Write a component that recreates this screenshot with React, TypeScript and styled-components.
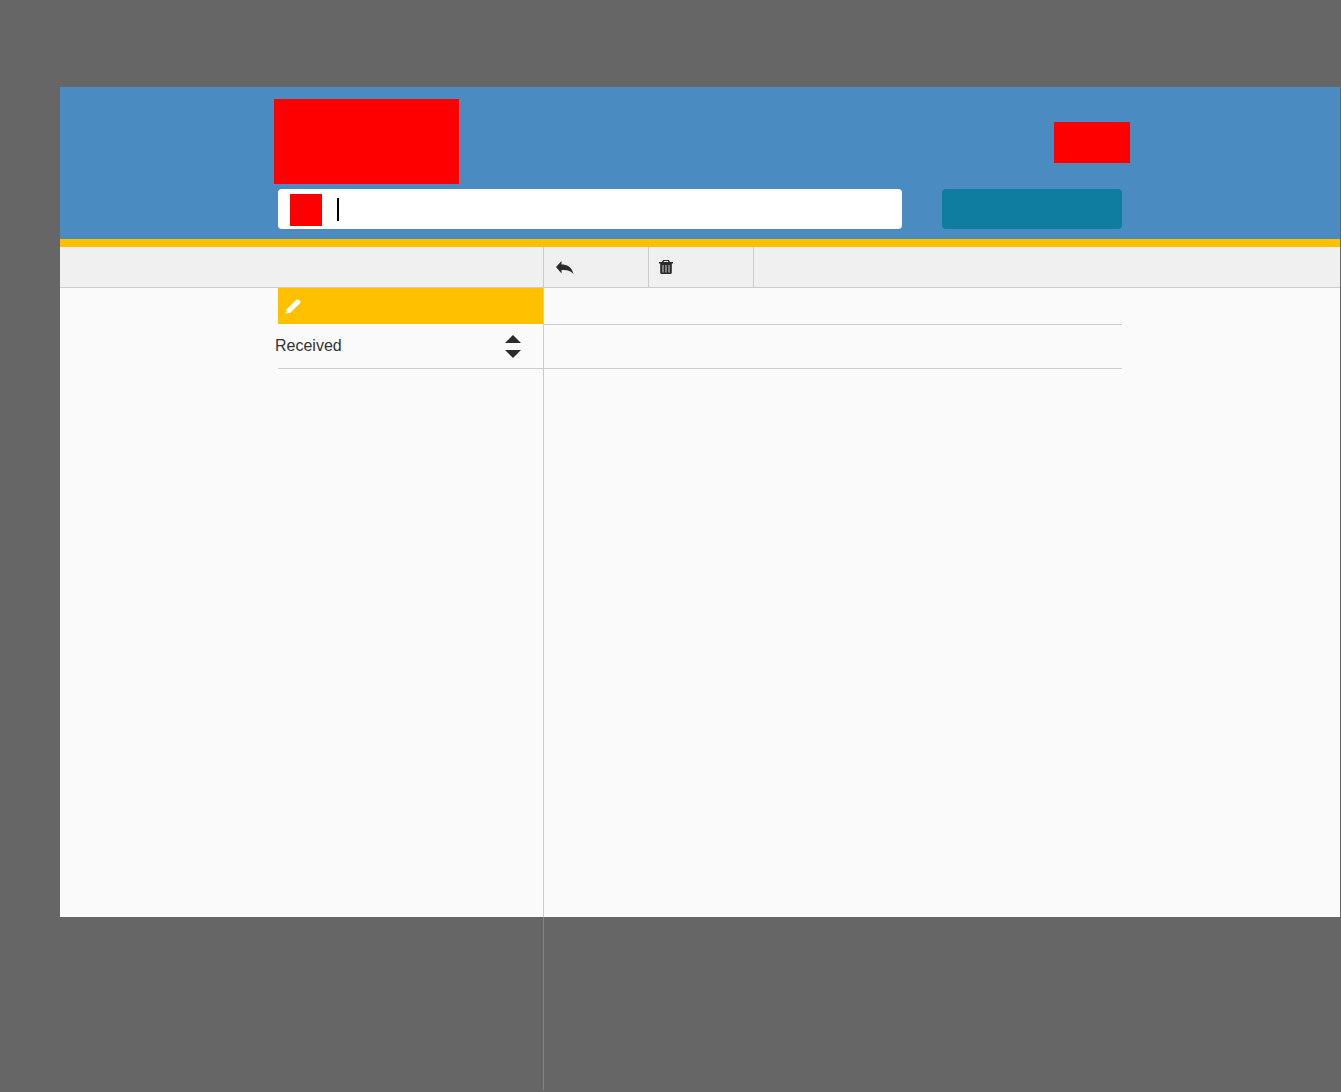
import React from "react";
import styled, { createGlobalStyle } from "styled-components";

const Global = createGlobalStyle`
  html, body { margin: 0; padding: 0; background: #666666; }
  body { font-family: "Liberation Sans", Arial, sans-serif; color: #333333; }
`;

const Page = styled.div`
  height: 1092px;
  padding: 87px 1px 0 60px;
  box-sizing: border-box;
  overflow: hidden;
`;

const Header = styled.header`
  height: 152px;
  background: #4a8bc2;
  box-sizing: border-box;
  padding: 12px 218px 0;
`;

const HeaderTop = styled.div`
  height: 84px;
  display: flex;
  justify-content: space-between;
  align-items: flex-start;
  margin-bottom: 6px;
`;

const Logo = styled.div`
  width: 185px;
  height: 85px;
  margin-left: -4px;
  background: #ff0000;
`;

const Account = styled.div`
  width: 76px;
  height: 41px;
  margin-top: 23px;
  margin-right: -8px;
  background: #ff0000;
`;

const SearchRow = styled.div`
  display: flex;
  justify-content: space-between;
`;

const Search = styled.div`
  width: 624px;
  height: 40px;
  background: #ffffff;
  border-radius: 4px;
  display: flex;
  align-items: flex-start;
  padding-left: 12px;
  gap: 15px;
  box-sizing: border-box;
`;

const SearchIcon = styled.div`
  width: 32px;
  height: 32px;
  margin-top: 5px;
  background: #ff0000;
`;

const Caret = styled.div`
  width: 2px;
  height: 23px;
  margin-top: 9px;
  background: #000000;
`;

const SearchButton = styled.div`
  width: 180px;
  height: 40px;
  background: #0f7d9f;
  border-radius: 4px;
`;

const Strip = styled.div`
  height: 8px;
  background: #ffc000;
`;

const Toolbar = styled.div`
  height: 41px;
  box-sizing: border-box;
  display: flex;
  background: #f0f0f0;
  border-bottom: 1px solid #cccccc;
`;

const ToolbarSpacer = styled.div`
  width: 484px;
  box-sizing: border-box;
  border-right: 1px solid #cccccc;
`;

const ToolButton = styled.div<{ $inset: number }>`
  width: 105px;
  box-sizing: border-box;
  border-right: 1px solid #cccccc;
  display: flex;
  align-items: center;
  padding-left: ${(p) => p.$inset}px;
`;

const Content = styled.main`
  height: 629px;
  display: flex;
  background: #fafafa;
`;

const Sidebar = styled.aside`
  width: 484px;
  flex: none;
  box-sizing: border-box;
  border-right: 1px solid #cccccc;
  padding-left: 218px;
`;

const ComposeRow = styled.div`
  height: 36px;
  margin-bottom: 1px;
  background: #ffc000;
  display: flex;
  align-items: center;
  padding-left: 7px;
  box-sizing: border-box;
`;

const SortRow = styled.div`
  height: 44px;
  box-sizing: border-box;
  border-bottom: 1px solid #cccccc;
  display: flex;
  align-items: center;
  justify-content: space-between;
  padding-right: 22px;
`;

const SortLabel = styled.span`
  font-size: 16px;
  margin-left: -3px;
  padding-bottom: 2px;
  color: #333333;
`;

const Detail = styled.section`
  width: 578px;
  flex: none;
`;

const DetailRow = styled.div<{ $height: number }>`
  height: ${(p) => p.$height}px;
  box-sizing: border-box;
  border-bottom: 1px solid #cccccc;
`;

const DividerTail = styled.div`
  width: 1px;
  height: 173px;
  margin-left: 483px;
  background: #858585;
`;

const ReplyIcon = () => (
  <svg width="18" height="15" viewBox="0 0 18 15" fill="#2b2b2b" aria-hidden="true">
    <path d="M0 7 L5.5 1 V4.5 C11 4.5 15.5 6.5 17.5 14 C15 11 11 9.5 5.5 10 V13.5 Z" />
  </svg>
);

const TrashIcon = () => (
  <svg width="14" height="14" viewBox="0 0 14 14" aria-hidden="true">
    <path
      fill="#2b2b2b"
      fillRule="evenodd"
      d="M3 2 L4 0 H10 L11 2 H14 V3.6 H12.8 V12.5 A1.5 1.5 0 0 1 11.3 14 H2.7 A1.5 1.5 0 0 1 1.2 12.5 V3.6 H0 V2 Z M4.6 2 H9.4 L9 1 H5 Z"
    />
    <path fill="#b8b8b8" d="M3.4 5 H4.6 V12.5 H3.4 Z M6.4 5 H7.6 V12.5 H6.4 Z M9.4 5 H10.6 V12.5 H9.4 Z" />
  </svg>
);

const PencilIcon = () => (
  <svg width="16" height="15" viewBox="0 0 16 15" aria-hidden="true">
    <path fill="#ffffff" d="M0.5 14.5 L1.5 10.5 L11 1 Q12.5 0 13.5 0.8 L15 2.3 Q15.8 3.5 14.8 4.6 L5 14 Z" />
    <path fill="#ffc000" d="M1.6 11.8 L2.9 13.1 L1.2 13.6 Z" />
  </svg>
);

const SortIcon = () => (
  <svg width="16" height="23" viewBox="0 0 16 23" fill="#2b2b2b" aria-hidden="true">
    <path d="M8 0 L16 8 L0 8 Z" />
    <path d="M0 15 L16 15 L8 23 Z" />
  </svg>
);

export default function App() {
  return (
    <>
      <Global />
      <Page>
        <Header>
          <HeaderTop>
            <Logo />
            <Account />
          </HeaderTop>
          <SearchRow>
            <Search>
              <SearchIcon />
              <Caret />
            </Search>
            <SearchButton />
          </SearchRow>
        </Header>
        <Strip />
        <Toolbar>
          <ToolbarSpacer />
          <ToolButton $inset={12}>
            <ReplyIcon />
          </ToolButton>
          <ToolButton $inset={10}>
            <TrashIcon />
          </ToolButton>
        </Toolbar>
        <Content>
          <Sidebar>
            <ComposeRow>
              <PencilIcon />
            </ComposeRow>
            <SortRow>
              <SortLabel>Received</SortLabel>
              <SortIcon />
            </SortRow>
          </Sidebar>
          <Detail>
            <DetailRow $height={37} />
            <DetailRow $height={44} />
          </Detail>
        </Content>
        <DividerTail />
      </Page>
    </>
  );
}
